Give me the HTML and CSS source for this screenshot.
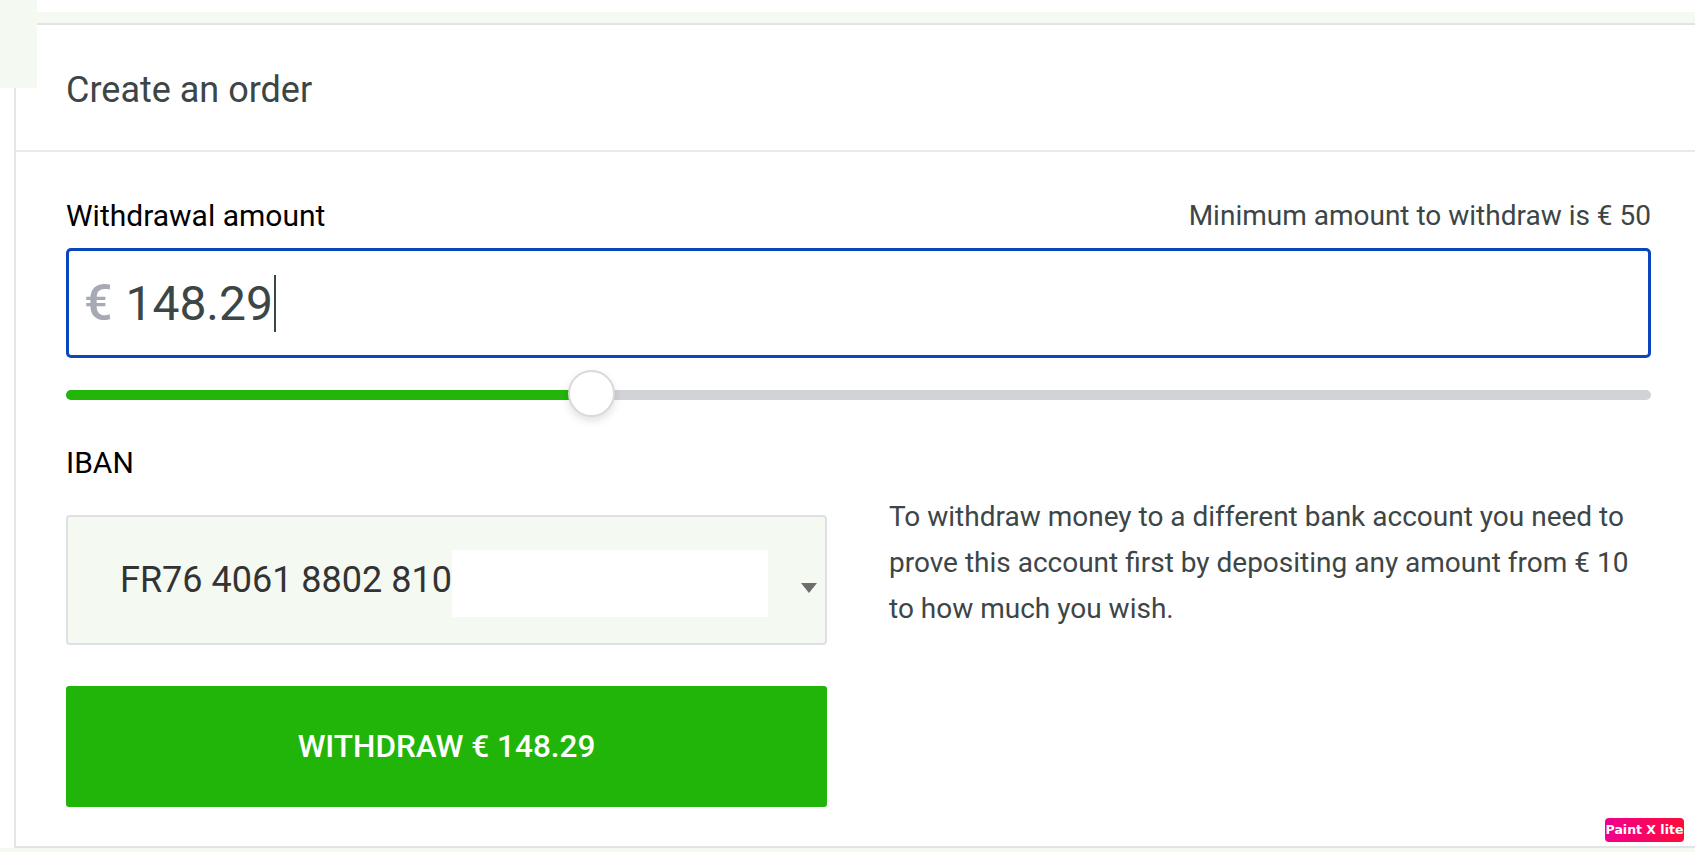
FILE: index.html
```html
<!DOCTYPE html>
<html lang="en">
<head>
<meta charset="utf-8">
<title>Create an order</title>
<link rel="stylesheet" href="styles.css">
</head>
<body>
<div class="page">
  <div class="corner"></div>
  <div class="top-gap"></div>
  <div class="band"></div>
  <section class="card">
    <header class="card-head">
      <h1 class="title">Create an order</h1>
    </header>
    <div class="card-body">
      <div class="label-row">
        <span class="label">Withdrawal amount</span>
        <span class="hint">Minimum amount to withdraw is € 50</span>
      </div>
      <div class="amount-input">
        <span class="currency">€</span>
        <span class="amount">148.29</span><span class="caret"></span>
      </div>
      <div class="slider">
        <div class="track">
          <div class="fill" style="width:33.1%"></div>
        </div>
        <div class="thumb" style="left:calc(33.1% - 23px)"></div>
      </div>
      <div class="iban-grid">
        <div class="iban-col">
          <div class="label iban-label">IBAN</div>
          <div class="select">
            <span class="iban-value">FR76 4061 8802 810</span><span class="redact"></span>
            <span class="arrow"></span>
          </div>
          <button class="withdraw">WITHDRAW € 148.29</button>
        </div>
        <p class="note">To withdraw money to a different bank account you need to prove this account first by depositing any amount from € 10 to how much you wish.</p>
      </div>
    </div>
  </section>
  <div class="band bottom"></div>
  <div class="badge">Paint X lite</div>
</div>
</body>
</html>
```
FILE: styles.css
```css
html, body {
  margin: 0;
  padding: 0;
  background: #ffffff;
  font-family: Roboto, "Noto Sans", "Liberation Sans", sans-serif;
  overflow: hidden;
}

.page {
  position: relative;
  width: 1695px;
  height: 852px;
}

.corner {
  position: absolute;
  left: 0;
  top: 0;
  width: 37px;
  height: 88px;
  background: #f4f9f1;
}

.top-gap {
  height: 12px;
}

.band {
  height: 11px;
  background: #f4f9f1;
}

.band.bottom {
  height: 4px;
}

.card {
  margin-left: 14px;
  border: 2px solid #e1e3e6;
  border-left-color: #e2e7e1;
  border-right: none;
  background: #ffffff;
}

.card-head {
  height: 127px;
  box-sizing: border-box;
  display: flex;
  align-items: center;
  padding: 4px 50px 0 50px;
  border-bottom: 2px solid #e8e9ec;
}

.title {
  margin: 0;
  font-size: 36px;
  font-weight: 400;
  color: #3c4647;
  line-height: 1;
}

.card-body {
  padding: 47px 44px 39px 50px;
}

.label-row {
  display: flex;
  justify-content: space-between;
  align-items: center;
  height: 34px;
}

.label {
  font-size: 30px;
  color: #000000;
  line-height: 34px;
}

.hint {
  font-size: 28px;
  color: #3c4647;
  line-height: 34px;
}

.amount-input {
  margin-top: 15px;
  height: 104px;
  border: 3px solid #0b46bd;
  border-radius: 5px;
  display: flex;
  align-items: center;
  padding-left: 15px;
  box-sizing: content-box;
}

.currency {
  font-size: 50px;
  font-weight: 500;
  color: #a7aab4;
  margin-right: 13px;
}

.amount {
  font-size: 48px;
  color: #3c4647;
}

.caret {
  width: 2px;
  height: 57px;
  background: #3c4647;
  margin-left: 1px;
}

.slider {
  position: relative;
  height: 74px;
  display: flex;
  align-items: center;
}

.track {
  width: 100%;
  height: 10px;
  border-radius: 5px;
  background: #d1d3d7;
  overflow: hidden;
}

.fill {
  height: 100%;
  background: #22b50a;
}

.thumb {
  position: absolute;
  top: 12px;
  width: 43px;
  height: 43px;
  border-radius: 50%;
  background: #ffffff;
  border: 2px solid #d9d9d9;
  box-shadow: 0 4px 8px rgba(0, 0, 0, 0.12);
}

.iban-grid {
  margin-top: 14px;
  display: grid;
  grid-template-columns: 761px 1fr;
  column-gap: 62px;
}

.iban-col {
  display: flex;
  flex-direction: column;
}

.select {
  margin-top: 35px;
  height: 126px;
  border: 2px solid #dfe0e4;
  border-radius: 4px;
  background: #f4f9f2;
  display: flex;
  align-items: center;
  padding-left: 52px;
  position: relative;
}

.iban-value {
  font-size: 36px;
  color: #333333;
}

.redact {
  display: inline-block;
  width: 316px;
  height: 67px;
  background: #ffffff;
  margin-top: 6px;
}

.arrow {
  margin-left: 33px;
  margin-top: 16px;
  width: 0;
  height: 0;
  border-left: 8px solid transparent;
  border-right: 8px solid transparent;
  border-top: 10px solid #6d6d6d;
}

.withdraw {
  margin-top: 41px;
  height: 121px;
  border: none;
  border-radius: 3px;
  background: #22b509;
  color: #ffffff;
  font-family: Roboto, "Noto Sans", sans-serif;
  font-size: 31.5px;
  font-weight: 500;
  padding: 0;
}

.note {
  margin: 48px 0 0 0;
  font-size: 28px;
  line-height: 46px;
  color: #3c4647;
}

.badge {
  position: absolute;
  left: 1605px;
  top: 818px;
  width: 79px;
  height: 24px;
  border-radius: 4px;
  background: linear-gradient(90deg, #f0008f, #ff0a3a);
  color: #ffffff;
  font-family: "DejaVu Sans", sans-serif;
  font-weight: 700;
  font-size: 12.5px;
  line-height: 24px;
  text-align: center;
}
```
